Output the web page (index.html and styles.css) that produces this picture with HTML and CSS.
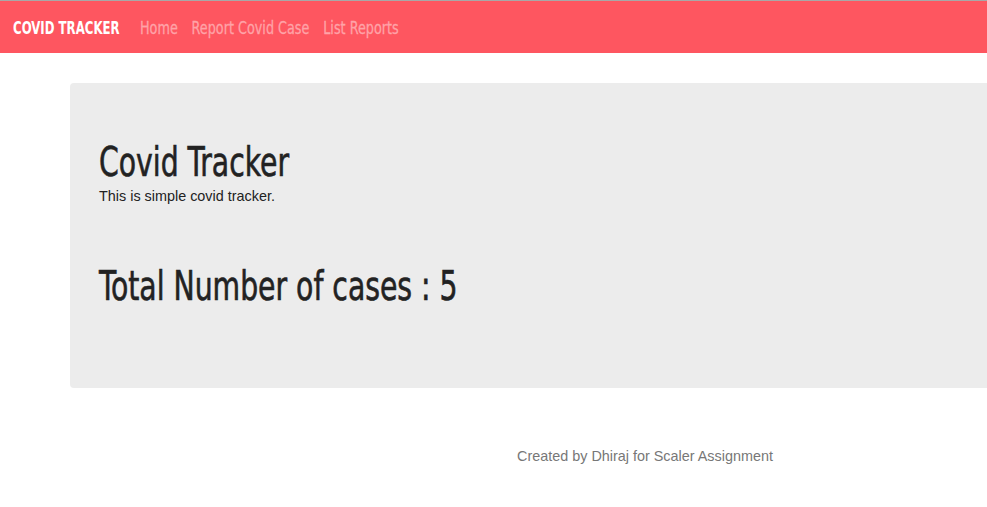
FILE: index.html
```html
<!DOCTYPE html>
<html>
<head>
<meta charset="utf-8">
<link rel="stylesheet" href="styles.css">
</head>
<body>
<nav class="navbar">
  <a class="brand">COVID TRACKER</a>
  <ul class="nav-links">
    <li><a>Home</a></li>
    <li><a>Report Covid Case</a></li>
    <li><a>List Reports</a></li>
  </ul>
</nav>
<main class="content">
  <section class="jumbotron">
    <h1 class="title">Covid Tracker</h1>
    <p class="lead">This is simple covid tracker.</p>
    <h2 class="total">Total Number of cases : 5</h2>
  </section>
  <footer class="footer">Created by Dhiraj for Scaler Assignment</footer>
</main>
</body>
</html>
```
FILE: styles.css
```css
html, body {
  margin: 0;
  padding: 0;
  overflow: hidden;
}
body {
  font-family: "Liberation Sans", Arial, sans-serif;
  background: #fff;
  color: #222;
  border-top: 1px solid #a8a8a8;
}
.navbar {
  display: flex;
  align-items: center;
  height: 52px;
  background: #fe5660;
  padding: 0 13px;
  font-family: "DejaVu Sans", sans-serif;
  font-stretch: condensed;
}
.brand {
  display: inline-block;
  width: 106px;
  white-space: nowrap;
  color: #fff;
  font-size: 18px;
  font-weight: bold;
  margin-right: 21px;
  transform: scaleX(0.726);
  transform-origin: left center;
}
.nav-links {
  display: flex;
  gap: 17.5px;
  list-style: none;
  margin: 0;
  padding: 0;
  transform: scaleX(0.79);
  transform-origin: left center;
  white-space: nowrap;
}
.nav-links a {
  color: #ffa3a8;
  font-size: 18px;
  -webkit-text-stroke: 0.3px #ffa3a8;
}
.content {
  padding: 30px 0 0 70px;
}
.jumbotron {
  background: #ececec;
  border-radius: 4px 0 0 4px;
  height: 305px;
  box-sizing: border-box;
  padding: 57px 29px 0;
}
.title,
.total {
  font-family: "DejaVu Sans", sans-serif;
  font-stretch: condensed;
  font-weight: normal;
  font-size: 40px;
  line-height: 44px;
  margin: 0;
  color: #222;
  -webkit-text-stroke: 0.6px #222;
  transform: scaleX(0.786);
  transform-origin: left center;
  white-space: nowrap;
}
.lead {
  font-size: 14.4px;
  margin: 2px 0 0;
  line-height: 20px;
}
.total {
  margin-top: 58px;
}
.footer {
  color: #777;
  font-size: 14.4px;
  margin: 60px 0 0 447px;
}
```
